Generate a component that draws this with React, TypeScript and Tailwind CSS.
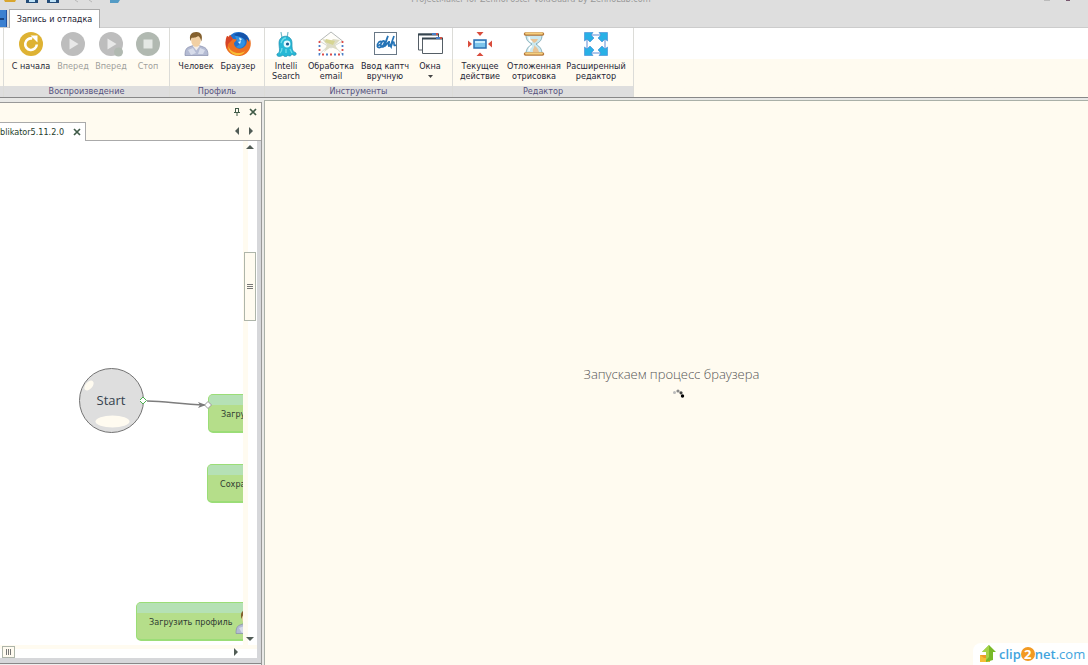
import React from "react";

function RoundIcon({ kind }: { kind: "restart" | "play" | "step" | "stop" }) {
  const fill = kind === "restart" ? "#deb233" : kind === "stop" ? "#b1b9b1" : "#bdbdbd";
  return (
    <svg width="26" height="26" viewBox="0 0 26 26">
      <circle cx="13" cy="13" r="12" fill={fill} />
      {kind === "restart" && (
        <>
          <path d="M18.8 13.500a5.800 5.800 0 1 1-4.500-6" fill="none" stroke="#fff" strokeWidth="2.600" />
          <path d="M12.500 4.500h7v7z" fill="#fff" />
        </>
      )}
      {(kind === "play" || kind === "step") && <path d="M9.500 7.500v11l9-5.500z" fill="#e8e8e8" />}
      {kind === "step" && <circle cx="20.500" cy="21" r="4.500" fill="#b1b9b1" />}
      {kind === "stop" && <rect x="8.500" y="8.500" width="9" height="9" fill="#e4e8e4" />}
    </svg>
  );
}

function PersonIcon() {
  return (
    <svg width="26" height="26" viewBox="0 0 26 26">
      <path d="M2 24.500c0-5 1-7.500 4-8.500l4-1.500h6l4.500 1.500c3 1 4.500 3.500 4.500 8.500z" fill="#b4bbd3" stroke="#858dab" strokeWidth=".7" />
      <path d="M9.500 14.500l3.800 5 3.800-5z" fill="#f4eee8" />
      <path d="M5 19l5-2 3 5-5 2zM17 17l5 2-2 4-5 0z" fill="#d7dcea" />
      <ellipse cx="13" cy="9.500" rx="4.800" ry="6.300" fill="#f1d0a4" />
      <path d="M7.500 10C5.500 3.500 9 .8 13.500 1c5 .2 6.500 4 4.800 9.500-.7-3-1.500-4.500-3.300-5.500-2 2-5.500 1.500-6.500 2z" fill="#84602e" />
    </svg>
  );
}

function FirefoxIcon() {
  return (
    <svg width="26" height="26" viewBox="0 0 26 26">
      <circle cx="13.500" cy="12.500" r="11.500" fill="#2272cf" />
      <path d="M9 4c3-3 9-3 12 0s4 7 2 10c-1-4-3-6-6-7-3 0-4-2-8-3z" fill="#1553a9" />
      <path d="M10 5c5 0 10 2 10 7-1 5-6 6-9 4l4-3-3-3z" fill="#2f92e4" />
      <path d="M14 6.500l3 1.500-2 2zM13 11l3-1-1 3z" fill="#dff4ff" />
      <path d="M2 5l2 1 1-2 3 4 4 .5-3 3.500c0 5 6 7.500 10 4 3-2 3-5 2.500-8 1.500 1 2 2 2.500 3l1-3c2.500 7-1 16-10 17C4.500 25.500-1 18 1 10z" fill="#ed7021" />
      <path d="M3 15c3 7 11 9 17 5-3 6-12 6-16-1z" fill="#f8bd35" />
      <path d="M2 5l2 1 1-2 3 4-5 5-1 5C0 13 0 9 2 5z" fill="#d64427" />
    </svg>
  );
}

function AlienIcon() {
  return (
    <svg width="26" height="26" viewBox="0 0 26 26">
      <path d="M9 7L8 1M14 7l1-6" stroke="#75bdca" strokeWidth="1.200" fill="none" />
      <path d="M6 12c0-9 13-9 13 0 0 6 0 8 4 10 1 3-3 3-4 1-1 3-4 2-4 1-1 2-4 2-5 0-2 2-7 2-6-1 4-2 2-5 2-11z" fill="#27b8d6" stroke="#218fb0" strokeWidth=".7" />
      <path d="M8 12c1-3 3-5 5-5M9 17c0 3-1 4-2 5m6-4v4m4-4l2 4" stroke="#71deea" strokeWidth="1.300" fill="none" />
      <circle cx="14" cy="13" r="3.400" fill="#e3faff" />
      <circle cx="14.500" cy="13" r="1.600" fill="#155a91" />
    </svg>
  );
}

function MailIcon() {
  return (
    <svg width="26" height="26" viewBox="0 0 26 26">
      <path d="M1.500 10L13 1l11.500 9v13.500h-23z" fill="#fffefa" stroke="#b5b9b8" />
      <path d="M1.500 10L13 17l11.500-7M1.500 23L10 15m14.500 8L16 15" fill="none" stroke="#d5d9d7" />
      <path d="M4 8l6 1 2 2 3-3 7 1-5 5 3 5-7-3-7 5 3-7z" fill="#dddcc4" />
      <path d="M8 8l9 2-2 4-8-3z" fill="#d6d592" />
      <path d="M1.500 10v13.500h23V10" fill="none" stroke="#fff" strokeWidth="1.800" />
      <path d="M1.500 10v13.500h23V10" fill="none" stroke="#dd4c48" strokeWidth="1.800" strokeDasharray="2 6" />
      <path d="M1.500 10v13.500h23V10" fill="none" stroke="#4a7fc8" strokeWidth="1.800" strokeDasharray="2 6" strokeDashoffset="4" />
    </svg>
  );
}

function CaptchaIcon() {
  return (
    <svg width="26" height="26" viewBox="0 0 26 26">
      <rect x="2.500" y="1.500" width="22" height="22" fill="#fff" stroke="#697886" />
      <path d="M5 15c7-3 5-6 2-4-3 3-2 7 2 5 3-1 5-7 2-6-3 2-3 6 0 6 3-1 3-7 5-11-2 5-4 9-3 10 3-3 5-6 4-3-1 4 0 4 2 1m3-8c-2 6-4 10-3 11 0-5 3-6 3-4 0 3 0 3 2 2" fill="none" stroke="#2473b6" strokeWidth="1.700" />
    </svg>
  );
}

function WindowsIcon() {
  return (
    <svg width="26" height="26" viewBox="0 0 26 26">
      <path d="M1.500 3h20v16h-20z" fill="#fff" stroke="#555e66" />
      <path d="M1 3.500h21" stroke="#35444f" strokeWidth="2" />
      <path d="M5.500 7.500h20v15h-20z" fill="#fff" stroke="#555e66" />
      <path d="M5 7.500h21" stroke="#35444f" strokeWidth="2" />
      <path d="M15 3h4M19 7h4" stroke="#477dc5" strokeWidth="2" />
      <path d="M19 3h2M23 7h2" stroke="#d15144" strokeWidth="2" />
    </svg>
  );
}

function CurrentIcon() {
  return (
    <svg width="26" height="26" viewBox="0 0 26 26">
      <path d="M9.500 1h7L13 5zM9.500 25h7L13 21.500zM1 9.500v7L5 13zM25 9.500v7L21 13z" fill="#d94c3c" />
      <rect x="7" y="9" width="12" height="8" fill="#7dc5ec" stroke="#2b70b3" strokeWidth="1.500" />
      <path d="M8 10h10v2H8z" fill="#c6edff" />
    </svg>
  );
}

function HourglassIcon() {
  return (
    <svg width="26" height="26" viewBox="0 0 26 26">
      <path d="M5 4c0 5 2 7 6 9-4 3-6 5-6 10h16c0-5-2-7-6-10 4-2 6-4 6-9z" fill="#cbe8ef" stroke="#86aeb9" />
      <path d="M9 8h8c-1 2-2 3-4 4zM13 14c2 2 4 3 5 7h-6c-1-3 2-4 1-7z" fill="#e9c496" />
      <path d="M8 6c0 3 1 4 3 5M8 20c0-3 1-4 3-5" stroke="#fff" strokeWidth="1.500" fill="none" />
      <path d="M4.500 3h17M4.500 23h17" stroke="#b67a3c" strokeWidth="3.500" strokeLinecap="round" />
      <path d="M5 2.500h16M5 22.500h16" stroke="#f5cf7e" strokeWidth="1.800" strokeLinecap="round" />
    </svg>
  );
}

function ExpandIcon() {
  const corner = "M1.500 1.500h8.500L8 4l3 3-4 4-3-3-2.500 2z";
  return (
    <svg width="26" height="26" viewBox="0 0 26 26">
      <rect x="4" y="4" width="18" height="18" fill="#fff" stroke="#5a8cd6" />
      <g fill="#28b0e6" stroke="#3f86d4" strokeWidth=".6">
        <path d={corner} />
        <path d={corner} transform="rotate(90 13 13)" />
        <path d={corner} transform="rotate(180 13 13)" />
        <path d={corner} transform="rotate(270 13 13)" />
      </g>
    </svg>
  );
}

type Tool = { lines: string[]; icon: React.ReactNode; width: string; disabled?: boolean; menu?: boolean };

const groups: { title: string; width: string; tools: Tool[] }[] = [
  {
    title: "Воспроизведение",
    width: "w-[166px]",
    tools: [
      { lines: ["С начала"], icon: <RoundIcon kind="restart" />, width: "w-[46px]" },
      { lines: ["Вперед"], icon: <RoundIcon kind="play" />, width: "w-[38px]", disabled: true },
      { lines: ["Вперед"], icon: <RoundIcon kind="step" />, width: "w-[38px]", disabled: true },
      { lines: ["Стоп"], icon: <RoundIcon kind="stop" />, width: "w-9", disabled: true },
    ],
  },
  {
    title: "Профиль",
    width: "w-[95px]",
    tools: [
      { lines: ["Человек"], icon: <PersonIcon />, width: "w-[44px]" },
      { lines: ["Браузер"], icon: <FirefoxIcon />, width: "w-10" },
    ],
  },
  {
    title: "Инструменты",
    width: "w-[188px]",
    tools: [
      { lines: ["Intelli", "Search"], icon: <AlienIcon />, width: "w-[34px]" },
      { lines: ["Обработка", "email"], icon: <MailIcon />, width: "w-14" },
      { lines: ["Ввод каптч", "вручную"], icon: <CaptchaIcon />, width: "w-[52px]" },
      { lines: ["Окна"], icon: <WindowsIcon />, width: "w-[38px]", menu: true },
    ],
  },
  {
    title: "Редактор",
    width: "w-[181px]",
    tools: [
      { lines: ["Текущее", "действие"], icon: <CurrentIcon />, width: "w-[46px]" },
      { lines: ["Отложенная", "отрисовка"], icon: <HourglassIcon />, width: "w-[62px]" },
      { lines: ["Расширенный", "редактор"], icon: <ExpandIcon />, width: "w-[62px]" },
    ],
  },
];

function ToolButton({ tool }: { tool: Tool }) {
  return (
    <button
      disabled={tool.disabled}
      className={`flex shrink-0 flex-col items-center whitespace-nowrap pt-[3px] text-[#252535] disabled:text-[#a0a09c] ${tool.width}`}
    >
      {tool.icon}
      <span className="mt-1 flex flex-col text-center leading-[10px]">
        {tool.lines.map((line) => (
          <span key={line}>{line}</span>
        ))}
      </span>
      {tool.menu && (
        <svg className="mt-1" width="5" height="3" viewBox="0 0 5 3">
          <path d="M0 0h5L2.500 3z" fill="#444" />
        </svg>
      )}
    </button>
  );
}

function TitleBar() {
  return (
    <header className="flex h-[27px] shrink-0 flex-col justify-between bg-[#dedede]">
      <div className="flex h-1 items-end overflow-hidden">
        <svg width="150" height="4" viewBox="0 0 150 4" className="shrink-0">
          <path d="M4 0h12l-1 2H5z" fill="#d9a62e" />
          <path d="M26 0h12v3H26zM47 0h12v3H47z" fill="#244c78" />
          <path d="M29 0h6v2h-6zM50 0h6v2h-6z" fill="#bde1f6" />
          <path d="M75 0l3 2M92 2l-3-2" stroke="#b8b8b8" />
          <path d="M110 0h10l-2 3h-8z" fill="#549bc5" />
        </svg>
        <h1 className="flex-1 whitespace-nowrap pr-[132px] text-center leading-[10px] text-[#999]">
          ProjectMaker for ZennoPoster VoldGuard by ZennoLab.com
        </h1>
        <div className="flex w-[44px] shrink-0 items-start gap-4 self-start">
          <span className="h-px w-1.5 bg-[#bbb]" />
          <span className="h-px w-1 bg-[#78576f]" />
        </div>
      </div>
      <div className="flex h-[18px] items-end">
        <button aria-label="Меню" className="flex h-[17px] w-[7px] items-center border-r border-[#2452a1] bg-[#3b80d1]">
          <span className="h-0.5 w-1 bg-[#174282]" />
        </button>
        <button className="z-10 -mb-px ml-0.5 h-[19px] w-[91px] whitespace-nowrap border border-b-0 border-[#aaa] bg-white text-[#252535]">
          Запись и отладка
        </button>
      </div>
    </header>
  );
}

function Ribbon() {
  return (
    <div className="flex h-[71px] shrink-0 border-b border-t border-b-[#888] border-t-[#ccc] bg-linear-to-b from-white from-[31px] to-[#fffbf0] to-[31px]">
      <div className="flex w-[3px] flex-col justify-end">
        <div className="h-[11px] bg-[#dedede]" />
      </div>
      {groups.map((group) => (
        <section key={group.title} className={`flex shrink-0 flex-col justify-between border-l border-[#dcdcd8] ${group.width}`}>
          <div className="flex pl-1">
            {group.tools.map((tool, index) => (
              <ToolButton key={index} tool={tool} />
            ))}
          </div>
          <h2 className="h-[11px] bg-[#dedede] text-center leading-[10px] text-[#55517d]">{group.title}</h2>
        </section>
      ))}
      <div className="w-px bg-[#dcdcd8]" />
    </div>
  );
}

function CloseIcon() {
  return (
    <svg width="8" height="8" viewBox="0 0 8 8">
      <path d="M1 1l6 6M7 1L1 7" stroke="#405b48" strokeWidth="1.700" />
    </svg>
  );
}

function Arrow({ direction }: { direction: "left" | "right" | "up" | "down" }) {
  const paths = { left: "M6 0v8L2 4z", right: "M2 0v8l4-4z", up: "M0 6h8L4 2z", down: "M0 2h8L4 6z" };
  return (
    <svg width="8" height="8" viewBox="0 0 8 8">
      <path d={paths[direction]} fill="#515c56" />
    </svg>
  );
}

function ActionNode({ label, place }: { label: string; place: string }) {
  return (
    <div className={`absolute h-[39px] w-[120px] overflow-hidden whitespace-nowrap rounded-[5px] border border-b-2 border-[#9bdd77] bg-[#b5de8a] text-[#303a32] ${place}`}>
      <div className="h-2.5 bg-[#b5e1b5]" />
      <div className="pl-3 leading-[18px]">{label}</div>
    </div>
  );
}

function Canvas() {
  return (
    <div className="relative min-w-0 flex-1 overflow-hidden bg-white">
      <svg className="absolute left-0 top-0" width="243" height="320" viewBox="0 0 243 320">
        <circle cx="111.500" cy="259.500" r="32" fill="#dedede" stroke="#737373" />
        <ellipse cx="89" cy="244.500" rx="5.800" ry="3.500" transform="rotate(-48 89 244.500)" fill="#fffbf0" />
        <ellipse cx="112.500" cy="280.500" rx="17" ry="6" fill="#fffbf0" />
      </svg>
      <span className="absolute left-[79px] top-[249px] w-16 text-center font-['Open_Sans',sans-serif] text-[13px] leading-5 text-[#35424d]">Start</span>
      <ActionNode label="Загрузить" place="left-[208px] top-[253px]" />
      <ActionNode label="Сохранить" place="left-[207px] top-[323px]" />
      <ActionNode label="Загрузить профиль" place="left-[136px] top-[461px]" />
      <svg className="absolute left-[140px] top-[250px]" width="80" height="24" viewBox="0 0 80 24">
        <path d="M7 10c20 0 30 3 59 4" fill="none" stroke="#7d7d7d" strokeWidth="1.500" />
        <path d="M58 11l8 3-8 3 2-3z" fill="#7d7d7d" />
        <path d="M-.5 9.500L3 6l3.500 3.500L3 13z" fill="#fff" stroke="#4caf50" />
        <path d="M64.500 14l3.500-3.500 3.500 3.500-3.500 3.500z" fill="#fff" stroke="#999" />
      </svg>
      <div className="absolute left-[234px] top-[468px]">
        <PersonIcon />
      </div>
    </div>
  );
}

function ProjectPanel() {
  return (
    <aside className="mt-0.5 flex w-[262px] shrink-0 flex-col border-r border-t border-[#999] bg-[#fffbf0]">
      <div className="flex h-[18px] items-center justify-end gap-2 pr-1">
        <button aria-label="Закрепить">
          <svg width="8" height="8" viewBox="0 0 8 8">
            <path d="M2.500 0v4.500M5.500 0v4.500M2 .5h4M1 4.500h6M4 5v3" fill="none" stroke="#405b48" />
          </svg>
        </button>
        <button aria-label="Закрыть панель"><CloseIcon /></button>
      </div>
      <div className="flex h-5 shrink-0 items-end justify-between border-b border-[#aaa]">
        <div className="-mb-px flex h-[19px] w-[86px] items-center justify-between border-r border-t border-[#aaa] bg-white pr-1">
          <span className="whitespace-nowrap text-[#263d2b]">blikator5.11.2.0</span>
          <button aria-label="Закрыть вкладку"><CloseIcon /></button>
        </div>
        <div className="flex gap-1.5 self-center pr-1.5">
          <button aria-label="Назад"><Arrow direction="left" /></button>
          <button aria-label="Далее"><Arrow direction="right" /></button>
        </div>
      </div>
      <div className="flex min-h-0 flex-1 flex-col border-b-[5px] border-r-4 border-[#d6d7da] bg-white">
        <div className="flex min-h-0 flex-1">
          <Canvas />
          <div className="flex w-3.5 shrink-0 flex-col items-center bg-linear-to-r from-[#fffbf0] from-[5px] to-white to-[5px] py-0.5">
            <button aria-label="Вверх"><Arrow direction="up" /></button>
            <button aria-label="Прокрутка по вертикали" className="mt-[101px] flex h-[69px] w-3 shrink-0 flex-col items-center justify-center gap-px border border-[#aeb5aa] bg-[#fffbf0]">
              <span className="h-px w-1.5 bg-[#777]" />
              <span className="h-px w-1.5 bg-[#777]" />
              <span className="h-px w-1.5 bg-[#777]" />
            </button>
            <button aria-label="Вниз" className="mt-auto"><Arrow direction="down" /></button>
          </div>
        </div>
        <div className="flex h-[13px] shrink-0 items-end justify-between bg-linear-to-b from-[#fffbf0] from-[4px] to-white to-[4px] pl-0.5 pr-[17px]">
          <button aria-label="Прокрутка по горизонтали" className="flex h-3 w-[13px] items-center justify-center gap-px border border-[#aeb5aa] bg-[#fffbf0]">
            <span className="h-1.5 w-px bg-[#777]" />
            <span className="h-1.5 w-px bg-[#777]" />
            <span className="h-1.5 w-px bg-[#777]" />
          </button>
          <button aria-label="Вправо" className="self-center"><Arrow direction="right" /></button>
        </div>
      </div>
      <div className="h-0.5 border-t border-[#888] bg-[#eee]" />
    </aside>
  );
}

function BrowserPane() {
  return (
    <main className="relative flex min-w-0 flex-1 flex-col items-center justify-center border-l border-t border-[#aab0a8] bg-[#fffbf0] pr-2.5">
      <p className="font-['Open_Sans',sans-serif] text-[13px] font-light leading-5 text-[#555]">Запускаем процесс браузера</p>
      <svg className="mb-0.5 ml-3.5 mt-1" width="14" height="12" viewBox="0 0 14 12">
        <circle cx="2.500" cy="4.500" r="1.500" fill="#bbb" />
        <circle cx="6" cy="3" r="1.600" fill="#888" />
        <circle cx="9" cy="4.800" r="1.600" fill="#444" />
        <circle cx="10.500" cy="8" r="1.700" fill="#000" />
      </svg>
      <a href="#clip2net" className="absolute bottom-0 right-0 flex h-[22px] w-[115px] items-center whitespace-nowrap rounded-tl-lg bg-white pl-1.5 font-['Open_Sans',sans-serif] text-[13px] leading-5 text-[#42a4dd]">
        <svg className="mr-0.5 shrink-0" width="18" height="20" viewBox="0 0 18 20">
          <path d="M1 11h10v7H1z" fill="#ed9928" />
          <path d="M1 11l4 3h8l-3 4H1z" fill="#f6bd35" />
          <path d="M10 1l7 7h-3v8l-7 2V8H3z" fill="#78b928" />
          <path d="M10 1L3 8h4v8l3-3z" fill="#a5d348" />
        </svg>
        <span className="font-semibold">clip</span>
        <b className="flex size-3.5 shrink-0 items-center justify-center rounded-full bg-[#f29a22] text-white">2</b>
        <span className="font-semibold">net</span>.com
      </a>
    </main>
  );
}

export default function App() {
  return (
    <div className="flex min-h-screen flex-col overflow-hidden bg-[#e8e8e6] font-['DejaVu_Sans_Condensed','DejaVu_Sans',sans-serif] text-[9px] leading-[10px]">
      <TitleBar />
      <Ribbon />
      <div className="flex min-h-0 flex-1 gap-0.5 pt-0.5">
        <ProjectPanel />
        <BrowserPane />
      </div>
    </div>
  );
}
